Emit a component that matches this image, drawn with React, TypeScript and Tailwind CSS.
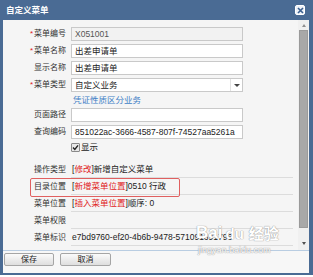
const FONT = { fontFamily: '"Liberation Sans", "Noto Sans CJK SC", sans-serif' };

function Label({ text, required }: { text: string; required?: boolean }) {
  return (
    <div className="flex items-center justify-end text-[8px] text-[#333] leading-none">
      {required && <span className="text-[#e02020] mr-[1px]">*</span>}
      {text}
    </div>
  );
}

function Field({ value, disabled }: { value?: string; disabled?: boolean }) {
  return (
    <div
      className={
        'h-[14px] border border-[#c9c9c9] flex items-center px-[3px] text-[8.5px] text-[#222] leading-none overflow-hidden whitespace-nowrap ' +
        (disabled ? 'bg-[#f2f2f2] text-[#555]' : 'bg-white')
      }
    >
      {value}
    </div>
  );
}

function InfoRow({ label, children }: { label: string; children?: React.ReactNode }) {
  return (
    <>
      <div className="h-[17px] flex items-center justify-end text-[8px] text-[#333] leading-none">{label}</div>
      <div className="h-[17px] border-b border-[#dcdcdc] flex items-center pl-[1px] text-[8.5px] text-[#222] leading-none whitespace-nowrap overflow-hidden">
        {children}
      </div>
    </>
  );
}

export default function App() {
  return (
    <div className="relative w-[313px] h-[277px] bg-white overflow-hidden" style={FONT}>
      <div className="flex flex-col h-[275px] bg-[#4a6b94]">
        {/* title bar */}
        <div className="h-[20px] flex items-center justify-between pl-[6px] pr-[8px]">
          <span className="text-white text-[8.5px] font-bold leading-none">自定义菜单</span>
          <span className="w-[10px] h-[10px] bg-[#eef2f8] border border-white rounded-[2px] flex items-center justify-center">
            <svg width="7" height="7" viewBox="0 0 7 7">
              <path d="M1 1L6 6M6 1L1 6" stroke="#3a5f8f" strokeWidth="1.6" />
            </svg>
          </span>
        </div>

        <div className="flex-1 flex flex-col ml-[3px] mr-[4px] mb-[2px] bg-[#f5f5f5]">
          {/* scroll area */}
          <div className="h-[230px] flex">
            <div className="w-[295px] pt-[7px]">
              <div className="grid grid-cols-[63px_172px] gap-x-[5px] gap-y-[3px]">
                <Label text="菜单编号" required />
                <Field value="X051001" disabled />
                <Label text="菜单名称" required />
                <Field value="出差申请单" />
                <Label text="显示名称" />
                <Field value="出差申请单" />
                <Label text="菜单类型" required />
                <div className="h-[14px] border border-[#c9c9c9] bg-white flex items-center text-[8.5px] text-[#222] leading-none">
                  <span className="flex-1 px-[3px]">自定义业务</span>
                  <span className="w-[12px] h-full border-l border-[#e2e2e2] flex items-center justify-center">
                    <span className="w-0 h-0 border-l-[3px] border-r-[3px] border-t-[3px] border-l-transparent border-r-transparent border-t-[#444]" />
                  </span>
                </div>
                <div />
                <div className="h-[10px] flex items-center pl-[2px] text-[8.5px] text-[#3f7fc6] leading-none">凭证性质区分业务</div>
                <Label text="页面路径" />
                <Field value="" />
                <Label text="查询编码" />
                <Field value="851022ac-3666-4587-807f-74527aa5261a" />
                <div />
                <div className="h-[10px] flex items-center gap-[1px] text-[8.5px] text-[#222] leading-none">
                  <span className="w-[9px] h-[9px] border border-[#8a8a8a] bg-[#e8e8e8] rounded-[1px] flex items-center justify-center">
                    <svg width="7" height="7" viewBox="0 0 7 7">
                      <path d="M1 3.6L2.8 5.4L6 1.4" stroke="#222" strokeWidth="1.4" fill="none" />
                    </svg>
                  </span>
                  显示
                </div>
              </div>

              <div className="grid grid-cols-[63px_222px] gap-x-[5px] mt-[9px]">
                <InfoRow label="操作类型">
                  [<span className="text-[#e02020]">修改</span>]新增自定义菜单
                </InfoRow>
                <InfoRow label="目录位置">
                  [<span className="text-[#e02020]">新增菜单位置</span>]0510 行政
                </InfoRow>
                <InfoRow label="菜单位置">
                  [<span className="text-[#e02020]">插入菜单位置</span>]顺序: 0
                </InfoRow>
                <InfoRow label="菜单权限" />
                <InfoRow label="菜单标识">e7bd9760-ef20-4b6b-9478-571091691796</InfoRow>
              </div>
            </div>

            {/* scrollbar */}
            <div className="w-[11px] flex flex-col bg-[#f0f0f0]">
              <div className="h-[10px] flex items-center justify-center">
                <span className="w-0 h-0 border-l-[2.5px] border-r-[2.5px] border-b-[3px] border-l-transparent border-r-transparent border-b-[#909090]" />
              </div>
              <div className="h-[198px] mx-[1px] bg-[#a8a8a8] border border-[#9a9a9a]" />
              <div className="flex-1" />
              <div className="h-[14px] flex items-center justify-center">
                <span className="w-0 h-0 border-l-[2.5px] border-r-[2.5px] border-t-[3px] border-l-transparent border-r-transparent border-t-[#505050]" />
              </div>
            </div>
          </div>

          {/* footer */}
          <div className="flex-1 border-t border-[#b9cde2] bg-[#f7f7f7] flex items-start gap-[6px] pl-[1px] pt-[2px]">
            <button className="w-[50px] h-[13px] border border-[#a5a5a5] rounded-[2px] bg-gradient-to-b from-[#fbfbfb] to-[#dedede] text-[8px] text-[#222] leading-none">
              保存
            </button>
            <button className="w-[51px] h-[13px] border border-[#a5a5a5] rounded-[2px] bg-gradient-to-b from-[#fbfbfb] to-[#dedede] text-[8px] text-[#222] leading-none">
              取消
            </button>
          </div>
        </div>
      </div>

      {/* annotation box */}
      <div className="absolute left-[30px] top-[178px] w-[150px] h-[19px] border border-[#e06060] rounded-[2px]" />

      {/* watermark */}
      <div className="absolute left-[196px] top-[224px] pointer-events-none flex flex-col items-start [text-shadow:0_0_1px_#9a9a9a,0_0_1px_#9a9a9a]">
        <div className="flex items-end gap-[3px] text-white leading-none">
          <span className="text-[17px] font-bold">Bai</span>
          <span className="text-[15px] font-bold rounded-full">du</span>
          <span className="text-[15px] font-bold ml-[2px]">经验</span>
        </div>
        <span className="text-[9px] text-white leading-none mt-[5px] ml-[2px]">jingyan.baidu.com</span>
      </div>
    </div>
  );
}
